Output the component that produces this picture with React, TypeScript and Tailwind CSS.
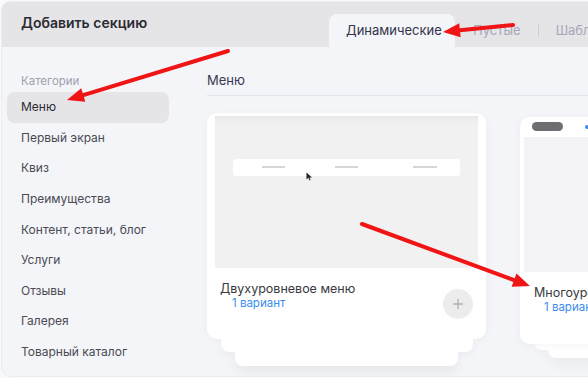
import React from 'react'

const categories = [
  'Меню',
  'Первый экран',
  'Квиз',
  'Преимущества',
  'Контент, статьи, блог',
  'Услуги',
  'Отзывы',
  'Галерея',
  'Товарный каталог',
]

function Arrow({ x1, y1, x2, y2 }: { x1: number; y1: number; x2: number; y2: number }) {
  const ang = Math.atan2(y2 - y1, x2 - x1)
  const len = 17
  const half = 7
  const bx = x2 - Math.cos(ang) * len
  const by = y2 - Math.sin(ang) * len
  const px = -Math.sin(ang) * half
  const py = Math.cos(ang) * half
  return (
    <g>
      <line x1={x1} y1={y1} x2={bx} y2={by} stroke="#f01414" strokeWidth={4} strokeLinecap="round" />
      <polygon points={`${x2},${y2} ${bx + px},${by + py} ${bx - px},${by - py}`} fill="#f01414" />
    </g>
  )
}

export default function App() {
  return (
    <div
      className="relative w-[588px] h-[378px] overflow-hidden bg-[#fafafb]"
      style={{ fontFamily: 'Inter, "Noto Sans", sans-serif' }}
    >
      <div className="ml-[2px] mt-[2px] w-[620px] h-[374px] rounded-[8px] overflow-hidden bg-[#f4f5f9] flex flex-col shadow-[0_0_0_1px_#ececf0]">
        {/* Header */}
        <div className="h-[45px] bg-[#e5e5e8] flex items-end shrink-0">
          <div className="self-start pt-[10px] pl-[19px] w-[327px] text-[14px] font-semibold text-[#2b2b33]">
            Добавить секцию
          </div>
          <div className="h-[33px] w-[126px] rounded-t-[8px] bg-[#f4f5f9] flex items-center pl-[17px] text-[13px] text-[#33334a]">
            Динамические
          </div>
          <div className="h-[33px] flex items-center pl-[18px] text-[13px] text-[#a7a7b8]">
            Пустые
            <span className="mx-[17px] w-px h-[13px] bg-[#cfcfd6]" />
            Шаблоны
          </div>
        </div>

        {/* Body */}
        <div className="flex flex-1">
          {/* Sidebar */}
          <div className="w-[205px] shrink-0 pl-[5px]">
            <div className="pl-[14px] pt-[26px] h-[45px] text-[11.5px] text-[#a0a0ac]">Категории</div>
            <div className="flex flex-col">
              {categories.map((c, i) => (
                <div
                  key={c}
                  className={
                    'h-[30.6px] w-[162px] flex items-center pl-[14px] text-[12px] rounded-[8px] ' +
                    (i === 0 ? 'bg-[#e5e5e8] text-[#2b2b33]' : 'text-[#4a4a52]')
                  }
                >
                  {c}
                </div>
              ))}
            </div>
          </div>

          {/* Content */}
          <div className="flex-1 pt-[24px]">
            <div className="text-[13px] text-[#3a3a52] pb-[4px] border-b border-[#e3e3e9]">Меню</div>
            <div className="flex gap-[34px] pt-[17px]">
              {/* Card 1 */}
              <div className="w-[279px] shrink-0 flex flex-col items-center">
                <div className="w-full h-[226px] bg-white rounded-[10px] shadow-[0_2px_8px_rgba(0,0,0,0.04)] px-[8px] pt-[3px] flex flex-col">
                  <div className="h-[152px] bg-[#f1f1f1] pt-[43px] px-[18px] shadow-[inset_0_8px_10px_-8px_rgba(0,0,0,0.08)]">
                    <div className="relative h-[17px] bg-white rounded-[3px] flex items-center">
                      <span className="absolute left-[29px] w-[23px] h-[2px] bg-[#d6d6d6]" />
                      <span className="absolute left-[102px] w-[23px] h-[2px] bg-[#d6d6d6]" />
                      <span className="absolute left-[180px] w-[24px] h-[2px] bg-[#d6d6d6]" />
                      <svg className="absolute left-[73px] top-[13px]" width="7" height="9" viewBox="0 0 7 9">
                        <path d="M0.5 0.5 L0.5 7.5 L2.3 5.8 L3.6 8.5 L4.6 8 L3.4 5.4 L6 5.4 Z" fill="#222" />
                      </svg>
                    </div>
                  </div>
                  <div className="relative flex-1">
                    <div className="pt-[13px] pl-[5px] text-[12.5px] leading-[15px] text-[#3a3a40]">Двухуровневое меню</div>
                    <div className="pl-[17px] text-[11.5px] leading-[14px] text-[#3b8cf0]">1 вариант</div>
                    <div className="absolute right-[5px] top-[21px] w-[30px] h-[30px] rounded-full bg-[#ececec] flex items-center justify-center">
                      <svg width="12" height="12" viewBox="0 0 12 12">
                        <path d="M6 1v10M1 6h10" stroke="#b0b0b0" strokeWidth="1.3" />
                      </svg>
                    </div>
                  </div>
                </div>
                <div className="w-[252px] h-[13px] bg-white rounded-b-[8px] shadow-[0_4px_8px_rgba(0,0,0,0.04)]" />
                <div className="w-[223px] h-[14px] bg-white rounded-b-[8px] shadow-[0_6px_12px_rgba(0,0,0,0.06)]" />
              </div>

              {/* Card 2 */}
              <div className="w-[200px] shrink-0 mt-[4px] flex flex-col items-start">
                <div className="relative w-full h-[227px] bg-white rounded-[10px] shadow-[0_2px_8px_rgba(0,0,0,0.04)] pl-[4px]">
                  <div className="h-[20px] flex items-center pl-[8px]">
                    <span className="w-[31px] h-[9px] rounded-full bg-[#6d6d72]" />
                    <span className="ml-[22px] w-[4px] h-[4px] rounded-full bg-[#3b8cf0]" />
                  </div>
                  <div className="h-[135px] bg-[#f2f2f7]" />
                  <div className="pt-[13px] pl-[10px] text-[12.5px] leading-[15px] text-[#3a3a40]">Многоуровневое меню</div>
                  <div className="pl-[20px] text-[11.5px] leading-[14px] text-[#3b8cf0]">1 вариант</div>
                </div>
                <div className="ml-[15px] w-[180px] h-[6px] bg-white rounded-b-[8px] shadow-[0_4px_8px_rgba(0,0,0,0.04)]" />
                <div className="ml-[28px] w-[170px] h-[8px] bg-white rounded-b-[8px] shadow-[0_6px_12px_rgba(0,0,0,0.06)]" />
              </div>
            </div>
          </div>
        </div>
      </div>

      {/* Annotations */}
      <svg className="absolute inset-0 pointer-events-none" width="588" height="378">
        <Arrow x1={513} y1={25} x2={443} y2={32} />
        <Arrow x1={228} y1={51} x2={67} y2={100} />
        <Arrow x1={362} y1={224} x2={530} y2={286} />
      </svg>
    </div>
  )
}
